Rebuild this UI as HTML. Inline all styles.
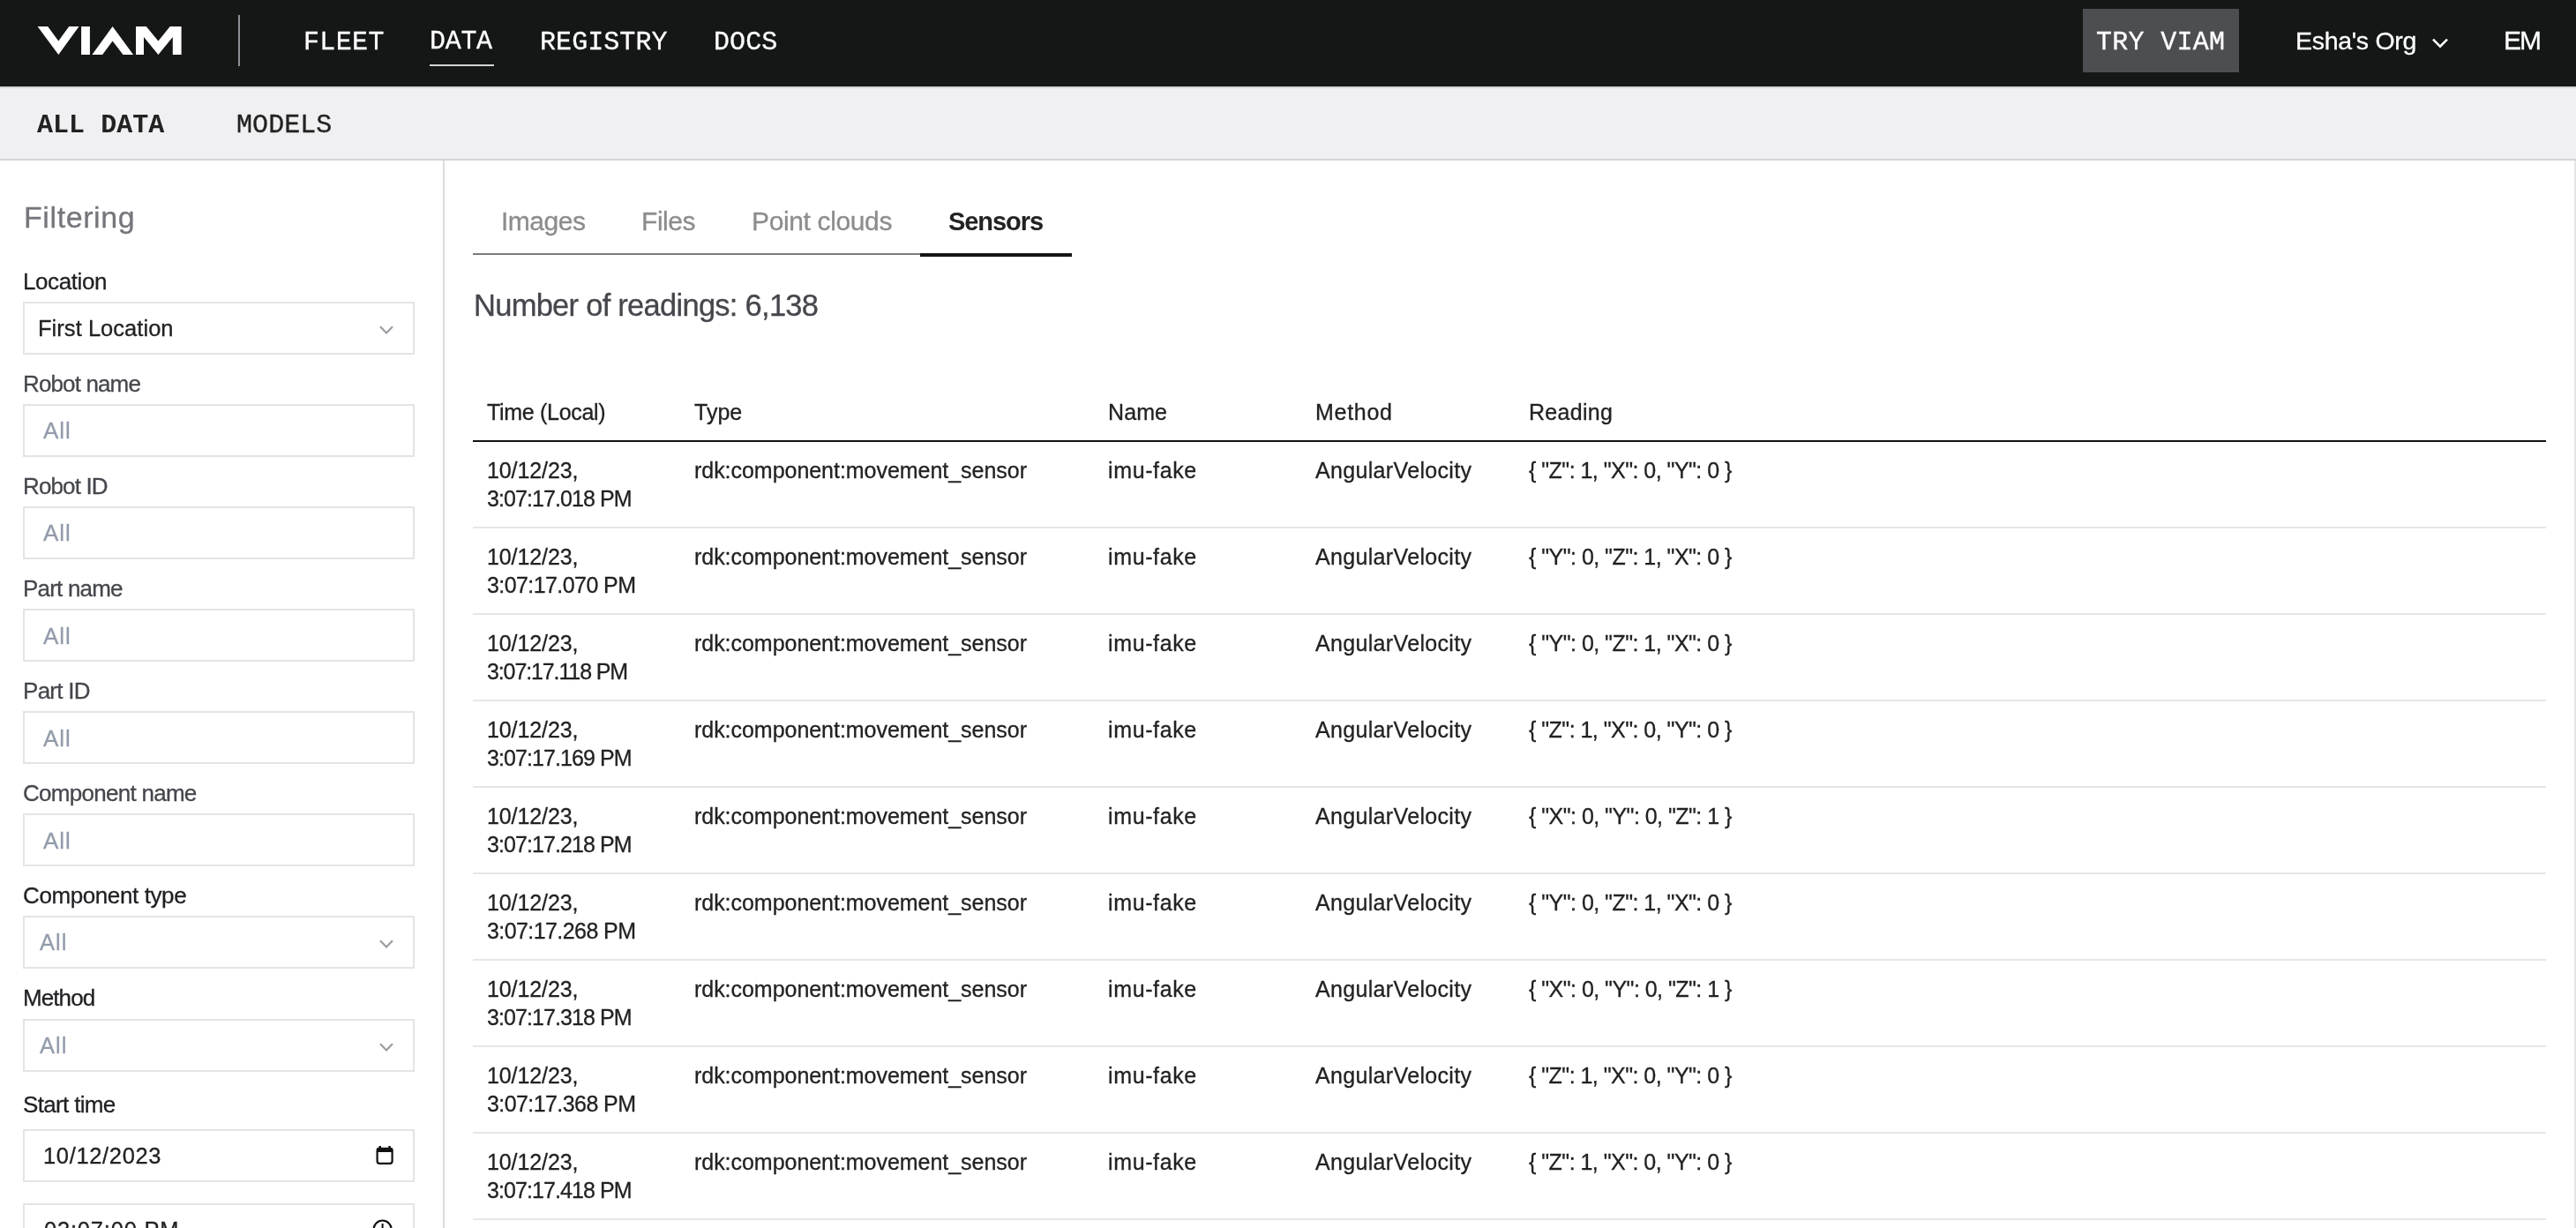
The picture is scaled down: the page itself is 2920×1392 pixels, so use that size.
<!DOCTYPE html>
<html><head><meta charset="utf-8"><title>Viam - Data</title>
<style>
html,body{margin:0;padding:0;width:2920px;height:1392px;overflow:hidden;background:#fff;}
body{position:relative;font-family:'Liberation Sans', sans-serif;}
.t{position:absolute;white-space:pre;will-change:transform;-webkit-text-stroke:0.3px currentColor;}
.r{position:absolute;}
</style></head><body>
<div class="r" style="left:0px;top:0px;width:2920px;height:98px;background:#151717"></div>
<div class="r" style="left:0px;top:98px;width:2920px;height:2px;background:#d4d4d8"></div>
<svg class="r" style="left:0;top:0" width="300" height="98" viewBox="0 0 300 98">
<polygon fill="#fff" points="42.6,30 54.2,30 66.3,46.4 78.2,30 89.5,30 66.3,62"/>
<rect fill="#fff" x="92.1" y="30" width="9.8" height="32"/>
<polygon fill="#fff" points="104.4,62 127.6,30 151.1,62 139.5,62 127.6,46.4 116.1,62"/>
<polygon fill="#fff" points="154,30 165.8,30 179.4,46.4 192.7,30 205.6,30 205.6,62 195.8,62 195.8,41.9 179.4,62 163,41.9 163,62 154,62"/>
<rect fill="#8e8e94" x="270" y="17" width="2" height="58"/>
</svg>
<div class="t" style="left:343.5px;top:33.0px;font-size:30px;line-height:30px;font-family:'Liberation Mono', monospace;font-weight:400;color:#fff;letter-spacing:0.35px;">FLEET</div>
<div class="t" style="left:486.5px;top:32.3px;font-size:30px;line-height:30px;font-family:'Liberation Mono', monospace;font-weight:400;color:#fff;letter-spacing:-0.3px;">DATA</div>
<div class="r" style="left:487px;top:73px;width:73px;height:2px;background:#d4d4d8"></div>
<div class="t" style="left:611.5px;top:33.3px;font-size:30px;line-height:30px;font-family:'Liberation Mono', monospace;font-weight:400;color:#fff;letter-spacing:0.071px;">REGISTRY</div>
<div class="t" style="left:809.0px;top:33.3px;font-size:30px;line-height:30px;font-family:'Liberation Mono', monospace;font-weight:400;color:#fff;letter-spacing:0.067px;">DOCS</div>
<div class="r" style="left:2361px;top:10px;width:177px;height:72px;background:#4d4e52"></div>
<div class="t" style="left:2376.0px;top:33.3px;font-size:30px;line-height:30px;font-family:'Liberation Mono', monospace;font-weight:400;color:#fff;letter-spacing:0.286px;">TRY VIAM</div>
<div class="t" style="left:2602.0px;top:31.9px;font-size:28.5px;line-height:28.5px;font-family:'Liberation Sans', sans-serif;font-weight:400;color:#fff;letter-spacing:-0.311px;">Esha's Org</div>
<svg class="r" style="left:2750px;top:36px" width="30" height="26" viewBox="2750 36 30 26"><polyline points="2758,44.7 2766,52.7 2774,44.7" fill="none" stroke="#fff" stroke-width="2.6"/></svg>
<div class="t" style="left:2837.5px;top:30.8px;font-size:30px;line-height:30px;font-family:'Liberation Sans', sans-serif;font-weight:400;color:#fff;letter-spacing:-2.1px;">EM</div>
<div class="r" style="left:0px;top:100px;width:2920px;height:80px;background:#f0f0f2"></div>
<div class="r" style="left:0px;top:180px;width:2920px;height:2px;background:#d4d4d8"></div>
<div class="t" style="left:42.0px;top:127.1px;font-size:30px;line-height:30px;font-family:'Liberation Mono', monospace;font-weight:700;color:#222;letter-spacing:0.029px;-webkit-text-stroke:0">ALL DATA</div>
<div class="t" style="left:268.0px;top:127.0px;font-size:30px;line-height:30px;font-family:'Liberation Mono', monospace;font-weight:400;color:#222;letter-spacing:0.06px;">MODELS</div>
<div class="r" style="left:502px;top:182px;width:2px;height:1210px;background:#dcdce0"></div>
<div class="r" style="left:2918px;top:182px;width:2px;height:1210px;background:#e4e4e8"></div>
<div class="t" style="left:27.0px;top:228.9px;font-size:34px;line-height:34px;font-family:'Liberation Sans', sans-serif;font-weight:400;color:#74767b;letter-spacing:0.588px;">Filtering</div>
<div class="t" style="left:26.0px;top:305.8px;font-size:26px;line-height:26px;font-family:'Liberation Sans', sans-serif;font-weight:400;color:#1f2023;letter-spacing:-0.4px;">Location</div>
<div class="r" style="left:26px;top:342px;width:444px;height:60px;box-sizing:border-box;border:2px solid #e4e4e7;background:#fff"></div>
<div class="t" style="left:43.0px;top:360.0px;font-size:25.5px;line-height:25.5px;font-family:'Liberation Sans', sans-serif;font-weight:400;color:#222;letter-spacing:0.038px;">First Location</div>
<svg class="r" style="left:420px;top:362px" width="36" height="24" viewBox="420 362 36 24"><polyline points="431,370.2 438,377.4 445,370.2" fill="none" stroke="#9a9ba1" stroke-width="2.2"/></svg>
<div class="t" style="left:26.0px;top:421.7px;font-size:26px;line-height:26px;font-family:'Liberation Sans', sans-serif;font-weight:400;color:#45474d;letter-spacing:-0.867px;">Robot name</div>
<div class="r" style="left:26px;top:458px;width:444px;height:60px;box-sizing:border-box;border:2px solid #e4e4e7;background:#fff"></div>
<div class="t" style="left:49.0px;top:475.4px;font-size:26px;line-height:26px;font-family:'Liberation Sans', sans-serif;font-weight:400;color:#939cab;letter-spacing:1.0px;">All</div>
<div class="t" style="left:26.0px;top:537.7px;font-size:26px;line-height:26px;font-family:'Liberation Sans', sans-serif;font-weight:400;color:#45474d;letter-spacing:-0.871px;">Robot ID</div>
<div class="r" style="left:26px;top:574px;width:444px;height:60px;box-sizing:border-box;border:2px solid #e4e4e7;background:#fff"></div>
<div class="t" style="left:49.0px;top:591.4px;font-size:26px;line-height:26px;font-family:'Liberation Sans', sans-serif;font-weight:400;color:#939cab;letter-spacing:1.0px;">All</div>
<div class="t" style="left:26.0px;top:654.0px;font-size:26px;line-height:26px;font-family:'Liberation Sans', sans-serif;font-weight:400;color:#45474d;letter-spacing:-0.798px;">Part name</div>
<div class="r" style="left:26px;top:690.3px;width:444px;height:60px;box-sizing:border-box;border:2px solid #e4e4e7;background:#fff"></div>
<div class="t" style="left:49.0px;top:707.7px;font-size:26px;line-height:26px;font-family:'Liberation Sans', sans-serif;font-weight:400;color:#939cab;letter-spacing:1.0px;">All</div>
<div class="t" style="left:26.0px;top:769.7px;font-size:26px;line-height:26px;font-family:'Liberation Sans', sans-serif;font-weight:400;color:#45474d;letter-spacing:-0.715px;">Part ID</div>
<div class="r" style="left:26px;top:806.4px;width:444px;height:60px;box-sizing:border-box;border:2px solid #e4e4e7;background:#fff"></div>
<div class="t" style="left:49.0px;top:823.8px;font-size:26px;line-height:26px;font-family:'Liberation Sans', sans-serif;font-weight:400;color:#939cab;letter-spacing:1.0px;">All</div>
<div class="t" style="left:26.0px;top:885.9px;font-size:26px;line-height:26px;font-family:'Liberation Sans', sans-serif;font-weight:400;color:#45474d;letter-spacing:-0.723px;">Component name</div>
<div class="r" style="left:26px;top:922.4px;width:444px;height:60px;box-sizing:border-box;border:2px solid #e4e4e7;background:#fff"></div>
<div class="t" style="left:49.0px;top:939.8px;font-size:26px;line-height:26px;font-family:'Liberation Sans', sans-serif;font-weight:400;color:#939cab;letter-spacing:1.0px;">All</div>
<div class="t" style="left:26.0px;top:1001.5px;font-size:26px;line-height:26px;font-family:'Liberation Sans', sans-serif;font-weight:400;color:#1f2023;letter-spacing:-0.4px;">Component type</div>
<div class="r" style="left:26px;top:1038.4px;width:444px;height:60px;box-sizing:border-box;border:2px solid #e4e4e7;background:#fff"></div>
<div class="t" style="left:45.0px;top:1056.4px;font-size:25.5px;line-height:25.5px;font-family:'Liberation Sans', sans-serif;font-weight:400;color:#939cab;letter-spacing:1.0px;">All</div>
<svg class="r" style="left:420px;top:1058.4px" width="36" height="24" viewBox="420 1058.4 36 24"><polyline points="431,1066.6000000000001 438,1073.8000000000002 445,1066.6000000000001" fill="none" stroke="#9a9ba1" stroke-width="2.2"/></svg>
<div class="t" style="left:26.0px;top:1117.9px;font-size:26px;line-height:26px;font-family:'Liberation Sans', sans-serif;font-weight:400;color:#1f2023;letter-spacing:-0.913px;">Method</div>
<div class="r" style="left:26px;top:1154.6px;width:444px;height:60px;box-sizing:border-box;border:2px solid #e4e4e7;background:#fff"></div>
<div class="t" style="left:45.0px;top:1172.6px;font-size:25.5px;line-height:25.5px;font-family:'Liberation Sans', sans-serif;font-weight:400;color:#939cab;letter-spacing:1.0px;">All</div>
<svg class="r" style="left:420px;top:1174.6px" width="36" height="24" viewBox="420 1174.6 36 24"><polyline points="431,1182.8 438,1190.0 445,1182.8" fill="none" stroke="#9a9ba1" stroke-width="2.2"/></svg>
<div class="t" style="left:26.0px;top:1239.1px;font-size:26px;line-height:26px;font-family:'Liberation Sans', sans-serif;font-weight:400;color:#1f2023;letter-spacing:-0.666px;">Start time</div>
<div class="r" style="left:26px;top:1280.3px;width:444px;height:60px;box-sizing:border-box;border:2px solid #e4e4e7;background:#fff"></div>
<div class="t" style="left:49.0px;top:1298.3px;font-size:25.5px;line-height:25.5px;font-family:'Liberation Sans', sans-serif;font-weight:400;color:#222;letter-spacing:0.656px;">10/12/2023</div>
<svg class="r" style="left:420px;top:1294.3px" width="32" height="32" viewBox="420 1294.3 32 32"><rect x="427.6" y="1302.1" width="17" height="17" rx="2.5" fill="none" stroke="#111" stroke-width="2.2"/><rect x="427" y="1301.3" width="18.2" height="5" rx="1.5" fill="#111"/><rect x="429.5" y="1299.3" width="2.5" height="4" fill="#111"/><rect x="440.3" y="1299.3" width="2.5" height="4" fill="#111"/></svg>
<div class="r" style="left:26px;top:1364.3px;width:444px;height:60px;box-sizing:border-box;border:2px solid #e4e4e7;background:#fff"></div>
<div class="t" style="left:50.0px;top:1382.3px;font-size:25.5px;line-height:25.5px;font-family:'Liberation Sans', sans-serif;font-weight:400;color:#222;letter-spacing:0.8px;">03:07:00 PM</div>
<svg class="r" style="left:418px;top:1375px" width="32" height="17" viewBox="418 1375 32 17"><circle cx="433.6" cy="1393.5" r="10" fill="none" stroke="#111" stroke-width="2.2"/><line x1="433.6" y1="1387" x2="433.6" y2="1394" stroke="#111" stroke-width="2"/></svg>
<div class="t" style="left:568.0px;top:235.6px;font-size:30px;line-height:30px;font-family:'Liberation Sans', sans-serif;font-weight:400;color:#8c8c8c;letter-spacing:-0.5px;">Images</div>
<div class="t" style="left:726.5px;top:235.6px;font-size:30px;line-height:30px;font-family:'Liberation Sans', sans-serif;font-weight:400;color:#8c8c8c;letter-spacing:-0.45px;">Files</div>
<div class="t" style="left:852.0px;top:235.6px;font-size:30px;line-height:30px;font-family:'Liberation Sans', sans-serif;font-weight:400;color:#8c8c8c;letter-spacing:-0.364px;">Point clouds</div>
<div class="t" style="left:1074.5px;top:237.3px;font-size:29px;line-height:29px;font-family:'Liberation Sans', sans-serif;font-weight:700;color:#222;letter-spacing:-1.05px;-webkit-text-stroke:0">Sensors</div>
<div class="r" style="left:536px;top:287px;width:507px;height:2px;background:#7c7c7c"></div>
<div class="r" style="left:1043px;top:287px;width:172px;height:4px;background:#151515"></div>
<div class="t" style="left:536.5px;top:329.0px;font-size:34.5px;line-height:34.5px;font-family:'Liberation Sans', sans-serif;font-weight:400;color:#45474c;letter-spacing:-0.729px;">Number of readings: 6,138</div>
<div class="t" style="left:552.0px;top:455.1px;font-size:25px;line-height:25px;font-family:'Liberation Sans', sans-serif;font-weight:400;color:#222;letter-spacing:-0.309px;">Time (Local)</div>
<div class="t" style="left:786.5px;top:455.1px;font-size:25px;line-height:25px;font-family:'Liberation Sans', sans-serif;font-weight:400;color:#222;letter-spacing:0px;">Type</div>
<div class="t" style="left:1256.0px;top:455.1px;font-size:25px;line-height:25px;font-family:'Liberation Sans', sans-serif;font-weight:400;color:#222;letter-spacing:0.1px;">Name</div>
<div class="t" style="left:1490.5px;top:455.1px;font-size:25px;line-height:25px;font-family:'Liberation Sans', sans-serif;font-weight:400;color:#222;letter-spacing:0.7px;">Method</div>
<div class="t" style="left:1733.0px;top:455.1px;font-size:25px;line-height:25px;font-family:'Liberation Sans', sans-serif;font-weight:400;color:#222;letter-spacing:0.283px;">Reading</div>
<div class="r" style="left:536px;top:499px;width:2350px;height:2px;background:#111"></div>
<div class="t" style="left:552.0px;top:520.6px;font-size:25px;line-height:25px;font-family:'Liberation Sans', sans-serif;font-weight:400;color:#222;letter-spacing:-0.1px;">10/12/23,</div>
<div class="t" style="left:552.0px;top:552.6px;font-size:25px;line-height:25px;font-family:'Liberation Sans', sans-serif;font-weight:400;color:#222;letter-spacing:-0.923px;">3:07:17.018 PM</div>
<div class="t" style="left:786.5px;top:520.6px;font-size:25px;line-height:25px;font-family:'Liberation Sans', sans-serif;font-weight:400;color:#222;letter-spacing:-0.036px;">rdk:component:movement_sensor</div>
<div class="t" style="left:1256.0px;top:520.6px;font-size:25px;line-height:25px;font-family:'Liberation Sans', sans-serif;font-weight:400;color:#222;letter-spacing:0.629px;">imu-fake</div>
<div class="t" style="left:1490.5px;top:520.6px;font-size:25px;line-height:25px;font-family:'Liberation Sans', sans-serif;font-weight:400;color:#222;letter-spacing:0.336px;">AngularVelocity</div>
<div class="t" style="left:1733.0px;top:520.6px;font-size:25px;line-height:25px;font-family:'Liberation Sans', sans-serif;font-weight:400;color:#222;letter-spacing:-0.532px;">{ &quot;Z&quot;: 1, &quot;X&quot;: 0, &quot;Y&quot;: 0 }</div>
<div class="r" style="left:536px;top:597px;width:2350px;height:2px;background:#e5e6ea"></div>
<div class="t" style="left:552.0px;top:618.6px;font-size:25px;line-height:25px;font-family:'Liberation Sans', sans-serif;font-weight:400;color:#222;letter-spacing:-0.1px;">10/12/23,</div>
<div class="t" style="left:552.0px;top:650.6px;font-size:25px;line-height:25px;font-family:'Liberation Sans', sans-serif;font-weight:400;color:#222;letter-spacing:-0.577px;">3:07:17.070 PM</div>
<div class="t" style="left:786.5px;top:618.6px;font-size:25px;line-height:25px;font-family:'Liberation Sans', sans-serif;font-weight:400;color:#222;letter-spacing:-0.036px;">rdk:component:movement_sensor</div>
<div class="t" style="left:1256.0px;top:618.6px;font-size:25px;line-height:25px;font-family:'Liberation Sans', sans-serif;font-weight:400;color:#222;letter-spacing:0.629px;">imu-fake</div>
<div class="t" style="left:1490.5px;top:618.6px;font-size:25px;line-height:25px;font-family:'Liberation Sans', sans-serif;font-weight:400;color:#222;letter-spacing:0.336px;">AngularVelocity</div>
<div class="t" style="left:1733.0px;top:618.6px;font-size:25px;line-height:25px;font-family:'Liberation Sans', sans-serif;font-weight:400;color:#222;letter-spacing:-0.532px;">{ &quot;Y&quot;: 0, &quot;Z&quot;: 1, &quot;X&quot;: 0 }</div>
<div class="r" style="left:536px;top:695px;width:2350px;height:2px;background:#e5e6ea"></div>
<div class="t" style="left:552.0px;top:716.6px;font-size:25px;line-height:25px;font-family:'Liberation Sans', sans-serif;font-weight:400;color:#222;letter-spacing:-0.1px;">10/12/23,</div>
<div class="t" style="left:552.0px;top:748.6px;font-size:25px;line-height:25px;font-family:'Liberation Sans', sans-serif;font-weight:400;color:#222;letter-spacing:-1.115px;">3:07:17.118 PM</div>
<div class="t" style="left:786.5px;top:716.6px;font-size:25px;line-height:25px;font-family:'Liberation Sans', sans-serif;font-weight:400;color:#222;letter-spacing:-0.036px;">rdk:component:movement_sensor</div>
<div class="t" style="left:1256.0px;top:716.6px;font-size:25px;line-height:25px;font-family:'Liberation Sans', sans-serif;font-weight:400;color:#222;letter-spacing:0.629px;">imu-fake</div>
<div class="t" style="left:1490.5px;top:716.6px;font-size:25px;line-height:25px;font-family:'Liberation Sans', sans-serif;font-weight:400;color:#222;letter-spacing:0.336px;">AngularVelocity</div>
<div class="t" style="left:1733.0px;top:716.6px;font-size:25px;line-height:25px;font-family:'Liberation Sans', sans-serif;font-weight:400;color:#222;letter-spacing:-0.532px;">{ &quot;Y&quot;: 0, &quot;Z&quot;: 1, &quot;X&quot;: 0 }</div>
<div class="r" style="left:536px;top:793px;width:2350px;height:2px;background:#e5e6ea"></div>
<div class="t" style="left:552.0px;top:814.6px;font-size:25px;line-height:25px;font-family:'Liberation Sans', sans-serif;font-weight:400;color:#222;letter-spacing:-0.1px;">10/12/23,</div>
<div class="t" style="left:552.0px;top:846.6px;font-size:25px;line-height:25px;font-family:'Liberation Sans', sans-serif;font-weight:400;color:#222;letter-spacing:-0.923px;">3:07:17.169 PM</div>
<div class="t" style="left:786.5px;top:814.6px;font-size:25px;line-height:25px;font-family:'Liberation Sans', sans-serif;font-weight:400;color:#222;letter-spacing:-0.036px;">rdk:component:movement_sensor</div>
<div class="t" style="left:1256.0px;top:814.6px;font-size:25px;line-height:25px;font-family:'Liberation Sans', sans-serif;font-weight:400;color:#222;letter-spacing:0.629px;">imu-fake</div>
<div class="t" style="left:1490.5px;top:814.6px;font-size:25px;line-height:25px;font-family:'Liberation Sans', sans-serif;font-weight:400;color:#222;letter-spacing:0.336px;">AngularVelocity</div>
<div class="t" style="left:1733.0px;top:814.6px;font-size:25px;line-height:25px;font-family:'Liberation Sans', sans-serif;font-weight:400;color:#222;letter-spacing:-0.532px;">{ &quot;Z&quot;: 1, &quot;X&quot;: 0, &quot;Y&quot;: 0 }</div>
<div class="r" style="left:536px;top:891px;width:2350px;height:2px;background:#e5e6ea"></div>
<div class="t" style="left:552.0px;top:912.6px;font-size:25px;line-height:25px;font-family:'Liberation Sans', sans-serif;font-weight:400;color:#222;letter-spacing:-0.1px;">10/12/23,</div>
<div class="t" style="left:552.0px;top:944.6px;font-size:25px;line-height:25px;font-family:'Liberation Sans', sans-serif;font-weight:400;color:#222;letter-spacing:-0.923px;">3:07:17.218 PM</div>
<div class="t" style="left:786.5px;top:912.6px;font-size:25px;line-height:25px;font-family:'Liberation Sans', sans-serif;font-weight:400;color:#222;letter-spacing:-0.036px;">rdk:component:movement_sensor</div>
<div class="t" style="left:1256.0px;top:912.6px;font-size:25px;line-height:25px;font-family:'Liberation Sans', sans-serif;font-weight:400;color:#222;letter-spacing:0.629px;">imu-fake</div>
<div class="t" style="left:1490.5px;top:912.6px;font-size:25px;line-height:25px;font-family:'Liberation Sans', sans-serif;font-weight:400;color:#222;letter-spacing:0.336px;">AngularVelocity</div>
<div class="t" style="left:1733.0px;top:912.6px;font-size:25px;line-height:25px;font-family:'Liberation Sans', sans-serif;font-weight:400;color:#222;letter-spacing:-0.532px;">{ &quot;X&quot;: 0, &quot;Y&quot;: 0, &quot;Z&quot;: 1 }</div>
<div class="r" style="left:536px;top:989px;width:2350px;height:2px;background:#e5e6ea"></div>
<div class="t" style="left:552.0px;top:1010.6px;font-size:25px;line-height:25px;font-family:'Liberation Sans', sans-serif;font-weight:400;color:#222;letter-spacing:-0.1px;">10/12/23,</div>
<div class="t" style="left:552.0px;top:1042.6px;font-size:25px;line-height:25px;font-family:'Liberation Sans', sans-serif;font-weight:400;color:#222;letter-spacing:-0.577px;">3:07:17.268 PM</div>
<div class="t" style="left:786.5px;top:1010.6px;font-size:25px;line-height:25px;font-family:'Liberation Sans', sans-serif;font-weight:400;color:#222;letter-spacing:-0.036px;">rdk:component:movement_sensor</div>
<div class="t" style="left:1256.0px;top:1010.6px;font-size:25px;line-height:25px;font-family:'Liberation Sans', sans-serif;font-weight:400;color:#222;letter-spacing:0.629px;">imu-fake</div>
<div class="t" style="left:1490.5px;top:1010.6px;font-size:25px;line-height:25px;font-family:'Liberation Sans', sans-serif;font-weight:400;color:#222;letter-spacing:0.336px;">AngularVelocity</div>
<div class="t" style="left:1733.0px;top:1010.6px;font-size:25px;line-height:25px;font-family:'Liberation Sans', sans-serif;font-weight:400;color:#222;letter-spacing:-0.532px;">{ &quot;Y&quot;: 0, &quot;Z&quot;: 1, &quot;X&quot;: 0 }</div>
<div class="r" style="left:536px;top:1087px;width:2350px;height:2px;background:#e5e6ea"></div>
<div class="t" style="left:552.0px;top:1108.6px;font-size:25px;line-height:25px;font-family:'Liberation Sans', sans-serif;font-weight:400;color:#222;letter-spacing:-0.1px;">10/12/23,</div>
<div class="t" style="left:552.0px;top:1140.6px;font-size:25px;line-height:25px;font-family:'Liberation Sans', sans-serif;font-weight:400;color:#222;letter-spacing:-0.923px;">3:07:17.318 PM</div>
<div class="t" style="left:786.5px;top:1108.6px;font-size:25px;line-height:25px;font-family:'Liberation Sans', sans-serif;font-weight:400;color:#222;letter-spacing:-0.036px;">rdk:component:movement_sensor</div>
<div class="t" style="left:1256.0px;top:1108.6px;font-size:25px;line-height:25px;font-family:'Liberation Sans', sans-serif;font-weight:400;color:#222;letter-spacing:0.629px;">imu-fake</div>
<div class="t" style="left:1490.5px;top:1108.6px;font-size:25px;line-height:25px;font-family:'Liberation Sans', sans-serif;font-weight:400;color:#222;letter-spacing:0.336px;">AngularVelocity</div>
<div class="t" style="left:1733.0px;top:1108.6px;font-size:25px;line-height:25px;font-family:'Liberation Sans', sans-serif;font-weight:400;color:#222;letter-spacing:-0.532px;">{ &quot;X&quot;: 0, &quot;Y&quot;: 0, &quot;Z&quot;: 1 }</div>
<div class="r" style="left:536px;top:1185px;width:2350px;height:2px;background:#e5e6ea"></div>
<div class="t" style="left:552.0px;top:1206.6px;font-size:25px;line-height:25px;font-family:'Liberation Sans', sans-serif;font-weight:400;color:#222;letter-spacing:-0.1px;">10/12/23,</div>
<div class="t" style="left:552.0px;top:1238.6px;font-size:25px;line-height:25px;font-family:'Liberation Sans', sans-serif;font-weight:400;color:#222;letter-spacing:-0.577px;">3:07:17.368 PM</div>
<div class="t" style="left:786.5px;top:1206.6px;font-size:25px;line-height:25px;font-family:'Liberation Sans', sans-serif;font-weight:400;color:#222;letter-spacing:-0.036px;">rdk:component:movement_sensor</div>
<div class="t" style="left:1256.0px;top:1206.6px;font-size:25px;line-height:25px;font-family:'Liberation Sans', sans-serif;font-weight:400;color:#222;letter-spacing:0.629px;">imu-fake</div>
<div class="t" style="left:1490.5px;top:1206.6px;font-size:25px;line-height:25px;font-family:'Liberation Sans', sans-serif;font-weight:400;color:#222;letter-spacing:0.336px;">AngularVelocity</div>
<div class="t" style="left:1733.0px;top:1206.6px;font-size:25px;line-height:25px;font-family:'Liberation Sans', sans-serif;font-weight:400;color:#222;letter-spacing:-0.532px;">{ &quot;Z&quot;: 1, &quot;X&quot;: 0, &quot;Y&quot;: 0 }</div>
<div class="r" style="left:536px;top:1283px;width:2350px;height:2px;background:#e5e6ea"></div>
<div class="t" style="left:552.0px;top:1304.6px;font-size:25px;line-height:25px;font-family:'Liberation Sans', sans-serif;font-weight:400;color:#222;letter-spacing:-0.1px;">10/12/23,</div>
<div class="t" style="left:552.0px;top:1336.6px;font-size:25px;line-height:25px;font-family:'Liberation Sans', sans-serif;font-weight:400;color:#222;letter-spacing:-0.923px;">3:07:17.418 PM</div>
<div class="t" style="left:786.5px;top:1304.6px;font-size:25px;line-height:25px;font-family:'Liberation Sans', sans-serif;font-weight:400;color:#222;letter-spacing:-0.036px;">rdk:component:movement_sensor</div>
<div class="t" style="left:1256.0px;top:1304.6px;font-size:25px;line-height:25px;font-family:'Liberation Sans', sans-serif;font-weight:400;color:#222;letter-spacing:0.629px;">imu-fake</div>
<div class="t" style="left:1490.5px;top:1304.6px;font-size:25px;line-height:25px;font-family:'Liberation Sans', sans-serif;font-weight:400;color:#222;letter-spacing:0.336px;">AngularVelocity</div>
<div class="t" style="left:1733.0px;top:1304.6px;font-size:25px;line-height:25px;font-family:'Liberation Sans', sans-serif;font-weight:400;color:#222;letter-spacing:-0.532px;">{ &quot;Z&quot;: 1, &quot;X&quot;: 0, &quot;Y&quot;: 0 }</div>
<div class="r" style="left:536px;top:1381px;width:2350px;height:2px;background:#e5e6ea"></div>
<div class="t" style="left:552.0px;top:1402.6px;font-size:25px;line-height:25px;font-family:'Liberation Sans', sans-serif;font-weight:400;color:#222;letter-spacing:-0.1px;">10/12/23,</div>
<div class="t" style="left:552.0px;top:1434.6px;font-size:25px;line-height:25px;font-family:'Liberation Sans', sans-serif;font-weight:400;color:#222;letter-spacing:-0.577px;">3:07:17.468 PM</div>
<div class="t" style="left:786.5px;top:1402.6px;font-size:25px;line-height:25px;font-family:'Liberation Sans', sans-serif;font-weight:400;color:#222;letter-spacing:-0.036px;">rdk:component:movement_sensor</div>
<div class="t" style="left:1256.0px;top:1402.6px;font-size:25px;line-height:25px;font-family:'Liberation Sans', sans-serif;font-weight:400;color:#222;letter-spacing:0.629px;">imu-fake</div>
<div class="t" style="left:1490.5px;top:1402.6px;font-size:25px;line-height:25px;font-family:'Liberation Sans', sans-serif;font-weight:400;color:#222;letter-spacing:0.336px;">AngularVelocity</div>
<div class="t" style="left:1733.0px;top:1402.6px;font-size:25px;line-height:25px;font-family:'Liberation Sans', sans-serif;font-weight:400;color:#222;letter-spacing:-0.532px;">{ &quot;Z&quot;: 1, &quot;X&quot;: 0, &quot;Y&quot;: 0 }</div>
<div class="r" style="left:536px;top:1479px;width:2350px;height:2px;background:#e5e6ea"></div>
</body></html>
